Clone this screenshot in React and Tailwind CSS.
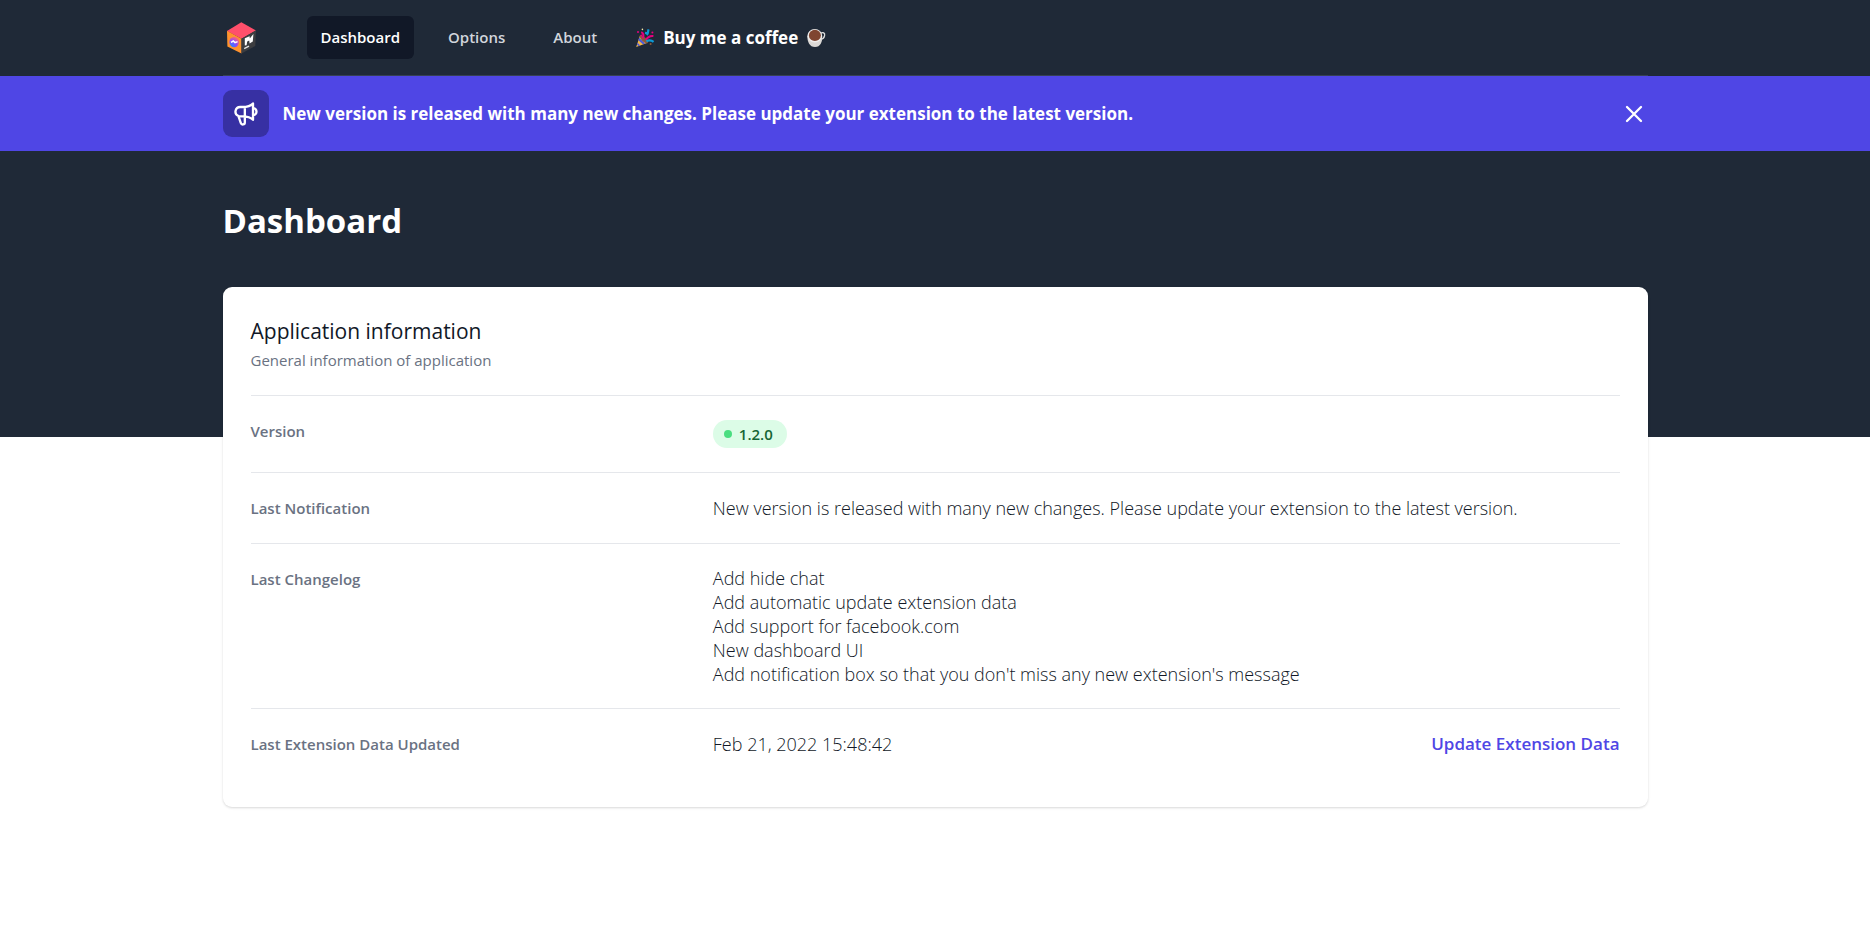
import { useState } from "react";

const NAV = ["Dashboard", "Options", "About"];
const MESSAGE =
  "New version is released with many new changes. Please update your extension to the latest version.";
const CHANGELOG = [
  "Add hide chat",
  "Add automatic update extension data",
  "Add support for facebook.com",
  "New dashboard UI",
  "Add notification box so that you don't miss any new extension's message",
];

function Logo() {
  return (
    <svg viewBox="0 0 36 36" className="size-9" role="img" aria-label="Logo">
      <defs>
        <radialGradient id="chat" cx="0.2" cy="0.95" r="1">
          <stop offset="0" stopColor="#1e8bff" />
          <stop offset="0.55" stopColor="#8a48ff" />
          <stop offset="1" stopColor="#ff6272" />
        </radialGradient>
      </defs>
      <path d="M18.300 2.200 33 10.400 18.500 18.800 4 11Z" fill="#ff4f6b" />
      <path d="M4 10.800 18.500 18.800v14.800L4.400 26.600Z" fill="#ff922e" />
      <path d="M33 10.300 18.500 18.800v14.800L32.300 26Z" fill="#3c3d40" />
      <ellipse cx="11.200" cy="22" rx="4.800" ry="5.200" fill="url(#chat)" />
      <path d="m8 22.400 2.300-1.400 1.700 1.600 2.600-1" fill="none" stroke="#fff" strokeWidth="1.500" />
      <path d="M21.800 18.200 26.600 16.200 26.800 18.600 30.400 14 29.800 21.400 26.600 23.600 26.200 20.400 24.200 21.400 23.600 25.200 21.800 25.400Z" fill="#fff" />
      <path d="m21.200 28.600 4.800-2.400" stroke="#e5e5e5" strokeWidth="1.300" />
    </svg>
  );
}

function Popper() {
  return (
    <svg viewBox="0 0 20 20" className="size-5" aria-hidden="true">
      <path d="M5 7.400 1.200 19l11.400-4.200Z" fill="#f5b945" />
      <path d="m4.200 9.800 6 5.600-2.300.9L3.300 12.200ZM2.500 14.800l2.800 2.600-1.900.7-1.400-1.500Z" fill="#4f5bd8" />
      <ellipse cx="8.800" cy="11.200" rx="5.400" ry="2.200" transform="rotate(45 8.800 11.200)" fill="#8a5a3c" />
      <path d="M7.400 10.400C9.400 8.400 8.600 5.200 6.200 4.200M11 12c1.400-2.800 4-4.400 7.400-4" fill="none" stroke="#e6007e" strokeWidth="2" />
      <path d="M13.600 1.400C12.600 3.600 13.600 5 11.800 7M10 4.800l3 .6M11.400 13.200c2.200-1 4.800-1.200 7.200.6" fill="none" stroke="#0c9bd8" strokeWidth="2.200" />
      <g fill="#e6007e">
        <circle cx="3" cy="4" r="1" />
        <circle cx="17.400" cy="4.600" r="1" />
        <circle cx="6.400" cy="7.400" r="1" />
      </g>
      <circle cx="7.400" cy="1.400" r=".8" fill="#f3e9a8" />
      <circle cx="15.600" cy="16" r="1" fill="#8a5a3c" />
    </svg>
  );
}

function Coffee() {
  return (
    <svg viewBox="0 0 20 20" className="size-5" aria-hidden="true">
      <path d="M14.400 5.400C17 3.600 19.200 5 18.600 7.600 18.200 9.800 16.600 11 14.800 11.200" fill="none" stroke="#dedede" strokeWidth="1.300" />
      <path d="M1.400 8C1.200 14 3.600 19 9 19s7.600-5 7.200-11Z" fill="#dcd9d6" />
      <ellipse cx="8.800" cy="7.800" rx="7.400" ry="6.800" fill="#efedeb" />
      <ellipse cx="8.900" cy="7.400" rx="6" ry="5.600" fill="#7f4531" />
    </svg>
  );
}

function Row({ label, children }) {
  return (
    <div className="grid grid-cols-3 gap-[18px] border-t border-gray-200 py-[23px]">
      <dt className="text-[15px] leading-[24px] font-semibold text-gray-500">{label}</dt>
      <dd className="col-span-2 text-[18px] leading-[24px] font-light">{children}</dd>
    </div>
  );
}

export default function App() {
  const [open, setOpen] = useState(true);
  return (
    <div className="min-h-screen bg-white pb-8 font-['Open_Sans','Noto_Sans',sans-serif] text-[#111827]">
      <div className="bg-[#1f2937] pb-[150px]">
        <nav className="mx-auto max-w-[1425px] border-b border-gray-700">
          <div className="flex h-[75px] items-center">
            <Logo />
            <div className="ml-12 flex gap-5">
              {NAV.map((n, i) => (
                <a
                  key={n}
                  href={"#" + n.toLowerCase()}
                  className={
                    i === 0
                      ? "rounded-md bg-[#111827] px-3.5 py-[9px] text-[15px] leading-[25px] font-semibold text-white"
                      : "rounded-md px-3.5 py-[9px] text-[15px] leading-[25px] font-semibold text-gray-300"
                  }
                >
                  {n}
                </a>
              ))}
            </div>
            <a href="#coffee" className="ml-6 flex items-center gap-2 text-[17px] font-bold text-white">
              <Popper />
              Buy me a coffee
              <Coffee />
            </a>
          </div>
        </nav>
        {open && (
          <div className="bg-[#4f46e5] py-3.5">
            <div className="mx-auto flex max-w-[1425px] items-center">
              <span className="flex h-[47px] w-[46px] items-center justify-center rounded-[9px] bg-[#3730a3]">
                <svg viewBox="0 0 24 24" className="size-7" fill="none" stroke="#fff" strokeWidth="2" strokeLinecap="round" strokeLinejoin="round" aria-hidden="true">
                  <path d="M11 5.882V19.240a1.760 1.760 0 01-3.417.592l-2.147-6.150M18 13a3 3 0 100-6M5.436 13.683A4.001 4.001 0 017 6h1.832c4.100 0 7.625-1.234 9.168-3v14c-1.543-1.766-5.067-3-9.168-3H7a3.988 3.988 0 01-1.564-.317z" />
                </svg>
              </span>
              <p className="ml-3.5 flex-1 text-[17px] font-bold text-white">{MESSAGE}</p>
              <button type="button" aria-label="Dismiss" onClick={() => setOpen(false)} className="cursor-pointer">
                <svg viewBox="0 0 24 24" className="size-7" fill="none" stroke="#fff" strokeWidth="2" strokeLinecap="round" aria-hidden="true">
                  <path d="M6 18 18 6M6 6l12 12" />
                </svg>
              </button>
            </div>
          </div>
        )}
        <header className="mx-auto max-w-[1425px] pt-12 pb-11">
          <h1 className="text-[33px] leading-[44px] font-bold text-white">Dashboard</h1>
        </header>
      </div>
      <main className="mx-auto -mt-[150px] max-w-[1425px]">
        <section className="rounded-[9px] bg-white p-7 shadow-[0_1px_3px_0_rgba(0,0,0,0.1),0_1px_2px_0_rgba(0,0,0,0.06)]">
          <h2 className="text-[21px] leading-[32px]">Application information</h2>
          <p className="mb-[22px] text-[15px] leading-[26px] text-gray-500">General information of application</p>
          <dl>
            <Row label="Version">
              <span className="my-px flex w-fit items-center gap-[7px] rounded-full bg-[#dcfce7] pr-3.5 pl-[11px] text-[15px] leading-[28px] font-semibold text-[#166534]">
                <svg viewBox="0 0 8 8" className="size-2" aria-hidden="true">
                  <circle cx="4" cy="4" r="4" fill="#4ade80" />
                </svg>
                1.2.0
              </span>
            </Row>
            <Row label="Last Notification">{MESSAGE}</Row>
            <Row label="Last Changelog">
              <ul className="flex flex-col gap-0.5 leading-[22px]">
                {CHANGELOG.map((c) => (
                  <li key={c}>{c}</li>
                ))}
              </ul>
            </Row>
            <Row label="Last Extension Data Updated">
              <div className="flex justify-between">
                <span>Feb 21, 2022 15:48:42</span>
                <button type="button" className="cursor-pointer text-[17px] font-semibold text-[#4f46e5]">
                  Update Extension Data
                </button>
              </div>
            </Row>
          </dl>
        </section>
      </main>
    </div>
  );
}
